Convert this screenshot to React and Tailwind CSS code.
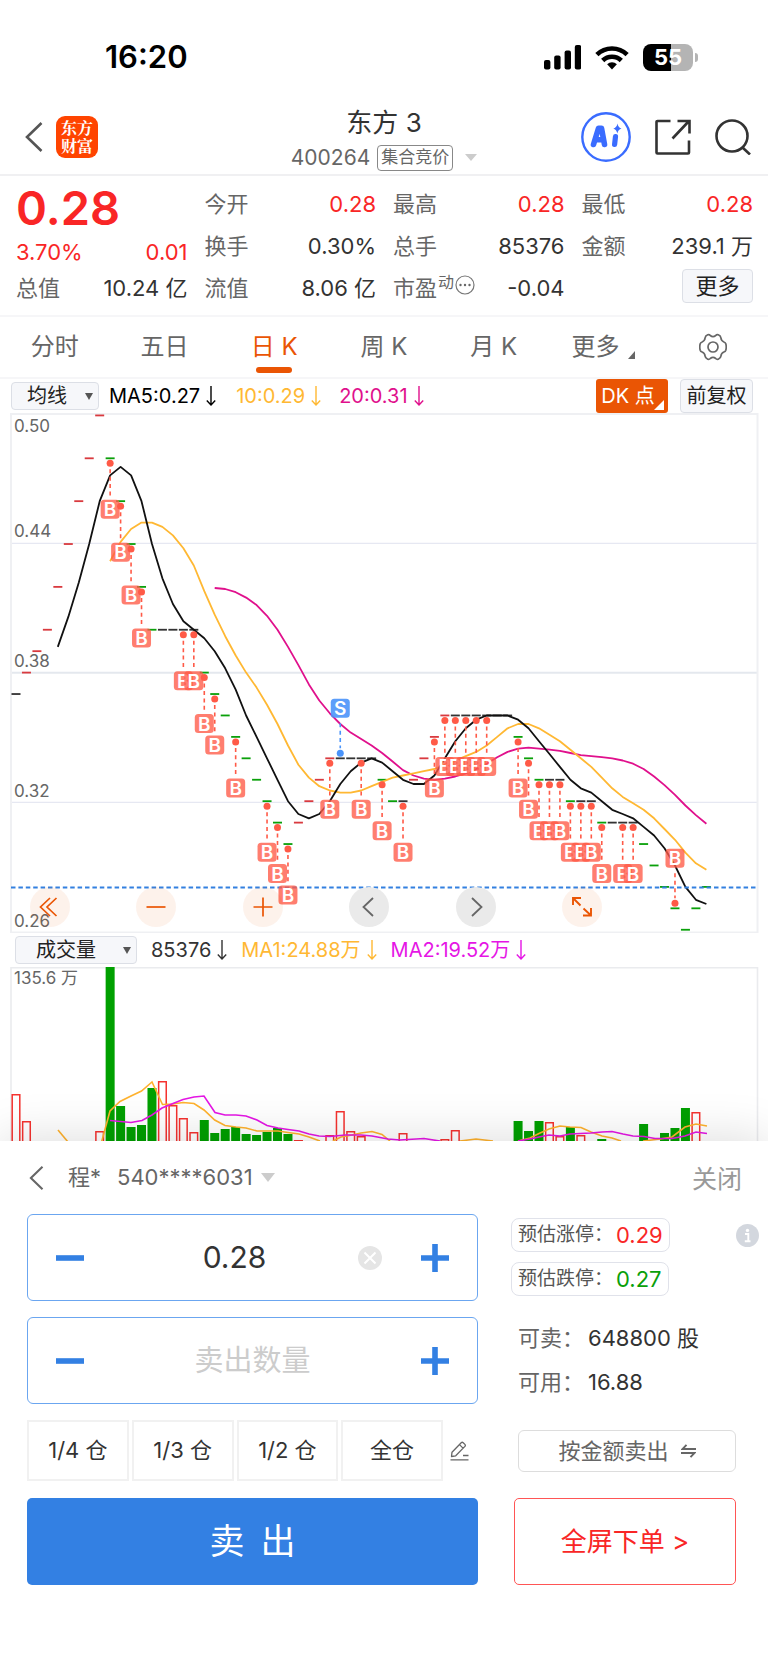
import React, { useState } from "react";

const FONT = "font-['Inter','Noto_Sans_CJK_SC',sans-serif]";

/* ---------- chart data ---------- */

// [price in cents, r = up / g = down / n = unchanged, trade mark]
const DAYS = [
  [37, "n"], [38, "r"], [39, "r"], [40, "r"], [42, "r"], [44, "r"], [46, "r"], [48, "r"], [50, "r"],
  [48, "g", "B"], [46, "g", "B"], [44, "g", "B"], [42, "g", "B"], [40, "g"], [40, "n"], [40, "n"],
  [40, "n", "B"], [40, "n", "B"], [38, "g", "B"], [37, "g", "B"], [36, "g"], [35, "g", "B"], [34, "g"],
  [33, "g"], [32, "g", "B"], [31, "g", "B"], [30, "g", "B"], [31, "r"], [32, "r"], [33, "r"],
  [34, "r", "B"], [34, "n", "S"], [34, "n"], [34, "n", "B"], [34, "n"], [33, "g", "B"], [32, "g"],
  [32, "n", "B"], [33, "r"], [34, "r"], [35, "r", "B"], [36, "r", "B"], [36, "n", "B"], [36, "n", "B"],
  [36, "n", "B"], [36, "n", "B"], [36, "n"], [36, "n"], [35, "g", "B"], [34, "g", "B"], [33, "g", "B"],
  [33, "n", "B"], [33, "n", "B"], [32, "g", "B"], [32, "n", "B"], [32, "n", "B"], [31, "g", "B"],
  [31, "n"], [31, "n", "B"], [31, "n", "B"], [30, "g"], [29, "g"], [28, "g"], [27, "g", "BT"],
  [26, "g"], [27, "g"], [28, "g"],
];

const COLORS = { r: "#d93a3f", g: "#0aa00a", n: "#333333" };
const dayX = (i) => 16 + i * 10.46;
const priceY = (p) => 259.6 - (p - 38) * 21.43;

function average(n) {
  const pts = [];
  for (let i = n - 1; i < DAYS.length; i++) {
    let s = 0;
    for (let j = 0; j < n; j++) s += DAYS[i - j][0];
    pts.push(`${dayX(i).toFixed(1)},${priceY(s / n).toFixed(1)}`);
  }
  return pts.join(" ");
}

// [day, colour, height of the bar above the visible floor]
const VOLUMES = [
  [0, "r", 47], [1, "r", 20], [8, "r", 10], [9, "g", 174], [10, "g", 35], [11, "g", 14], [12, "g", 16],
  [13, "g", 53], [14, "r", 60], [15, "r", 36], [16, "r", 23], [17, "r", 9], [18, "g", 21], [19, "g", 8],
  [20, "g", 12], [21, "g", 14], [22, "g", 7], [23, "g", 6], [24, "g", 9], [25, "g", 13], [26, "g", 7],
  [27, "r", 1], [30, "r", 6], [31, "r", 30], [32, "r", 10], [33, "r", 5], [37, "r", 8], [41, "r", 2],
  [42, "r", 11], [48, "g", 20], [49, "g", 10], [50, "g", 20], [51, "r", 19], [52, "r", 5], [53, "g", 14],
  [54, "r", 6], [56, "g", 2], [60, "g", 17], [62, "g", 8], [63, "g", 13], [64, "g", 33], [65, "r", 29],
];

const VOLUME_MA1 = [
  "58,163 68,175",
  "101,177 110,144 120,134.5 131,129 141.5,124 152,115 162.5,137.5 173,137 183,135.5 194,136.5 204,143 214.7,153 225,158.5 236,160 246,161 257,164 267,164 278,164 288,165.5 299,167 309,170 320,174",
  "333,174 341,170 352,168 361,166 372,164.5 382,167.5 390,174",
  "460,174 476,172 493,174",
  "518,174 530,171 539,166.5 549,162 560,159 570,160 581,160.5 591,165 602,169 612,171 621,174",
  "643,174 660,172 672,170 685,160 696,157 707,159",
];
const VOLUME_MA2 = [
  "110,153.5 131,155.5 142,153.5 152,148 162,141 173,136.5 183,132.5 194,130 204,129 215,145.5 225,148 236,148 246,149 257,153 267,158.5 278,161 288,162.5 299,164 309,167 319,169 330,169.5 345,168 361,168 372,169 388,172 400,173 424,171.5 440,174",
  "518,174 530,172 539,170 549,168 560,169 570,167 591,166 602,165 612,164.5 623,167 633,169 644,169.5 655,171.5 672,171.5 685,169 696,165 707,166.5",
];

/* ---------- small drawings ---------- */

function Chevron({ className }) {
  return (
    <svg viewBox="0 0 18 30" className={className} fill="none" stroke="currentColor" strokeWidth="2.6">
      <path d="M16.5 1 2 15l14.5 14" />
    </svg>
  );
}

function Caret({ className }) {
  return (
    <svg viewBox="0 0 12 8" className={className} fill="currentColor" preserveAspectRatio="none" aria-hidden="true">
      <path d="M0 0h12L6 8z" />
    </svg>
  );
}

function Mark({ i, day }) {
  const x = dayX(i);
  const y = priceY(day[0]);
  const kind = day[2];
  const sell = kind === "S";
  const color = sell ? "#4a94fa" : "#ff5a47";
  const up = sell || kind === "BT";
  const dot = up ? y - 5 : y + 5;
  const box = up ? y - 50 : y + 51;
  return (
    <g>
      <line x1={x} x2={x} y1={up ? box + 15 : dot + 6} y2={up ? dot - 5 : box - 13} stroke={color} strokeWidth="1.6" strokeDasharray="4 3.4" />
      <circle cx={x} cy={dot} r="3.5" fill={color} />
      <rect x={x - 9.5} y={box - 9.5} width="19" height="19" rx="3.5" fill={color} fillOpacity={sell ? 0.9 : 0.78} />
      <text x={x} y={box + 7} textAnchor="middle" fill="#fff" className="text-[19px] font-semibold">
        {kind[0]}
      </text>
    </g>
  );
}

/* ---------- sections ---------- */

function StatusBar() {
  return (
    <div className="flex h-[94px] items-center justify-between pt-5 pr-[70px] pl-[105px] text-black">
      <span className="text-[31px] leading-9 font-semibold">16:20</span>
      <div className="flex items-center gap-[14px]">
        <svg viewBox="0 0 37 25" className="h-[25px] w-[37px]" aria-label="信号">
          <rect x="0" y="15" width="6.4" height="9.5" rx="2" />
          <rect x="10.2" y="10.5" width="6.4" height="14" rx="2" />
          <rect x="20.6" y="5.5" width="6.4" height="19" rx="2" />
          <rect x="30.8" y="0" width="6.4" height="24.5" rx="2" />
        </svg>
        <svg viewBox="0 0 34 25" className="h-[25px] w-[34px]" fill="none" stroke="#000" strokeWidth="4.6" aria-label="无线网络">
          <path d="M1.9 9.6a21.6 21.6 0 0 1 30.2 0" />
          <path d="M7.7 15.5a13.3 13.3 0 0 1 18.6 0" />
          <path d="M17 24.6l-4.9-5.3a7 7 0 0 1 9.8 0z" fill="#000" stroke="none" />
        </svg>
        <div className="flex items-center gap-[2px]">
          <div className="flex h-[27px] w-[50px] items-center justify-center rounded-[8px] bg-[linear-gradient(90deg,#000_55%,#b4b4b4_55%)] text-[22px] leading-[27px] font-bold text-white">
            55
          </div>
          <div className="h-[9px] w-[3px] rounded-r-full bg-[#b4b4b4]" />
        </div>
      </div>
    </div>
  );
}

function Header() {
  return (
    <header className="grid h-[82px] grid-cols-[1fr_auto_1fr] items-center border-b-2 border-[#f0f0f2] px-[17px] pt-[6px]">
      <div className="flex items-center gap-[13px] pl-2">
        <button aria-label="返回" className="text-[#555]">
          <Chevron className="h-[30px] w-[18px]" />
        </button>
        <div className="flex h-[42px] w-[42px] items-center justify-center rounded-[9px] bg-[#ff4400] text-center font-['Noto_Serif_CJK_SC','Noto_Sans_CJK_SC',serif] text-[16px] leading-[18px] font-bold text-white">
          <span>
            东方
            <br />
            财富
          </span>
        </div>
      </div>
      <div className="flex flex-col items-center gap-[5px] pt-[6px]">
        <h1 className="text-[26px] leading-[30px] text-[#333]">东方 3</h1>
        <button className="flex h-[30px] items-center text-[#666]">
          <span className="text-[21px]">400264</span>
          <span className="ml-[7px] flex h-[26px] items-center rounded-[4px] border border-[#888] px-[3px] text-[17px]">
            集合竞价
          </span>
          <Caret className="ml-3 h-[7px] w-3 text-[#ccc]" />
        </button>
      </div>
      <div className="flex items-center justify-end gap-6">
        <button aria-label="Ai">
          <svg viewBox="0 0 50 50" className="h-[50px] w-[50px]">
            <circle cx="25" cy="25" r="23.7" fill="none" stroke="#3a6cff" strokeWidth="2.4" />
            <g fill="none" stroke="#3a6cff" strokeLinecap="round" strokeLinejoin="round">
              <path d="M12.5 32.5 17.500 16.200h3l3 16.300M15 27.800h7" strokeWidth="5.600" />
              <path d="M34.500 24.500 33.600 32.500" strokeWidth="5.200" />
            </g>
            <path d="M36.500 11.500q.7 4.200 4 5-3.400.9-4.200 5-.8-4.100-4-5 3.400-.8 4.200-5z" fill="#3a6cff" />
          </svg>
        </button>
        <button aria-label="分享">
          <svg viewBox="0 0 36 36" className="h-9 w-9" fill="none" stroke="#333" strokeWidth="2.6">
            <path d="M15.500 2H2.500a1 1 0 0 0-1 1v30.500a1 1 0 0 0 1 1H33a1 1 0 0 0 1-1V21.500" />
            <path d="M22.500 2H34.500V14.500M34 2 17.500 19.500" />
          </svg>
        </button>
        <button aria-label="搜索">
          <svg viewBox="0 0 36 36" className="h-9 w-9" fill="none" stroke="#333" strokeWidth="2.6">
            <circle cx="17" cy="17" r="15.500" />
            <path d="M27.500 28.500 35 35.500" />
          </svg>
        </button>
      </div>
    </header>
  );
}

function Figure({ label, value, red, children }) {
  return (
    <div className="flex h-[42px] items-center justify-between">
      <span className="flex items-center text-[#666]">
        {label}
        {children}
      </span>
      <span className={red ? "text-[#f92626]" : "text-[#333]"}>{value}</span>
    </div>
  );
}

function Quote() {
  return (
    <section className="grid h-[141px] grid-cols-4 gap-x-[17px] border-b-2 border-[#f6f6f8] pt-[7px] pr-[15px] pl-4 text-[22px] leading-7">
      <div>
        <div className="flex h-[49px] items-center text-[47px] leading-[49px] font-semibold text-[#f92626]">0.28</div>
        <div className="flex h-[35px] items-center justify-between pt-1 text-[#f92626]">
          <span>3.70%</span>
          <span>0.01</span>
        </div>
        <Figure label="总值" value="10.24 亿" />
      </div>
      <div>
        <Figure label="今开" value="0.28" red />
        <Figure label="换手" value="0.30%" />
        <Figure label="流值" value="8.06 亿" />
      </div>
      <div>
        <Figure label="最高" value="0.28" red />
        <Figure label="总手" value="85376" />
        <Figure label="市盈" value="-0.04">
          <span className="mb-3 ml-[1px] text-[16px] leading-4">动</span>
          <svg viewBox="0 0 20 20" className="mb-[7px] ml-[1px] h-5 w-5" aria-hidden="true">
            <circle cx="10" cy="10" r="9" fill="none" stroke="#777" strokeWidth="1.200" />
            <circle cx="5.500" cy="10" r="1.200" fill="#666" />
            <circle cx="10" cy="10" r="1.200" fill="#666" />
            <circle cx="14.500" cy="10" r="1.200" fill="#666" />
          </svg>
        </Figure>
      </div>
      <div>
        <Figure label="最低" value="0.28" red />
        <Figure label="金额" value="239.1 万" />
        <div className="flex justify-end pt-[2px]">
          <button className="h-[34px] w-[71px] rounded-[4px] border border-[#dcdfe6] bg-[#f6f7fa] text-[#222]">
            更多
          </button>
        </div>
      </div>
    </section>
  );
}

function Periods() {
  const [active, setActive] = useState("日K");
  return (
    <nav className="grid h-[62px] grid-cols-7 border-b-2 border-[#f6f6f8] text-[24px] leading-[60px] text-[#666]">
      {["分时", "五日", "日K", "周K", "月K"].map((t) => (
        <button key={t} onClick={() => setActive(t)} className={`flex flex-col items-center ${active === t ? "text-[#ea5504]" : ""}`}>
          <span>{t.replace("K", " K")}</span>
          {active === t && <span className="-mt-[10px] h-[6px] w-9 rounded-full bg-[#ea5504]" />}
        </button>
      ))}
      <button className="flex items-end justify-center">
        <span>更多</span>
        <svg viewBox="0 0 7 8" className="mb-[18px] ml-[9px] h-2 w-[7px]" fill="#666" aria-hidden="true">
          <path d="M7 0v8H0z" />
        </svg>
      </button>
      <button aria-label="设置" className="flex items-center justify-center">
        <svg viewBox="0 0 28 28" className="h-7 w-7" fill="none" stroke="#666" strokeWidth="1.700" strokeLinejoin="round">
          <path d="M8.700 1.800q1.600-.4 2.600.7 2.700 2.200 5.400 0 1-1.100 2.600-.7 2.400 1 2.600 3 .2 3 3 4.200 1.500.5 1.900 1.800.9 3.200 0 6.400-.4 1.300-1.900 1.800-2.800 1.200-3 4.200-.2 2-2.600 3-1.600.4-2.600-.7-2.700-2.200-5.400 0-1 1.100-2.600.7-2.400-1-2.600-3-.2-3-3-4.200-1.500-.5-1.900-1.800-.9-3.200 0-6.400.4-1.300 1.900-1.800 2.800-1.200 3-4.200.2-2 2.600-3z" />
          <circle cx="14" cy="14" r="5" />
        </svg>
      </button>
    </nav>
  );
}

function Dropdown({ label, className }) {
  return (
    <div className={`relative flex h-[28px] items-center rounded-[4px] border border-[#dcdfe6] bg-[#f6f7fa] ${className}`}>
      <select aria-label={label} className="h-full w-full appearance-none text-[20px] leading-[26px] text-[#222] outline-none">
        <option>{label}</option>
      </select>
      <Caret className="pointer-events-none absolute right-[5px] h-[7px] w-2 text-[#555]" />
    </div>
  );
}

function Down() {
  return (
    <svg viewBox="0 0 10 20" className="ml-[6px] h-5 w-[10px]" fill="none" stroke="currentColor" strokeWidth="1.400" aria-label="下降">
      <path d="M5 0v18.500M.8 14.500 5 19l4.200-4.500" />
    </svg>
  );
}

function Indicator({ children, className }) {
  return <span className={`flex items-center ${className}`}>{children}<Down /></span>;
}

function PriceChart() {
  const tools = "flex h-10 w-10 items-center justify-center rounded-full";
  const warm = `${tools} bg-[#ea5504]/8 text-[#ea5504]`;
  const grey = `${tools} bg-[#eaeaea] text-[#666]`;
  return (
    <div className="relative">
      <svg viewBox="0 0 768 520" className="block w-full" role="img" aria-label="日K线图">
        <path d="M10 130.300H757M10 389.300H757" stroke="#e6e8f2" strokeWidth="1.300" />
        <path d="M10 259.700H757" stroke="#e4e8ee" strokeWidth="2" />
        <rect x="11" y="1" width="746.500" height="518.500" fill="none" stroke="#eff0f3" strokeWidth="2" />
        <g fill="#666" className="text-[17px]">
          <text x="14" y="19">0.50</text>
          <text x="14" y="124">0.44</text>
          <text x="14" y="254">0.38</text>
          <text x="14" y="384">0.32</text>
          <text x="14" y="514">0.26</text>
        </g>
        {DAYS.map((d, i) => (
          <rect key={i} x={dayX(i) - 4.500} y={priceY(d[0]) - 0.900} width="9" height="1.800" fill={COLORS[d[1]]} />
        ))}
        <g fill="none" strokeWidth="1.800" strokeLinejoin="round">
          <polyline points={average(20)} stroke="#e0108c" />
          <polyline points={average(10)} stroke="#ffb833" />
          <polyline points={average(5)} stroke="#111" />
        </g>
        <path d="M11 474.500H757" stroke="#3380e0" strokeWidth="2" strokeDasharray="4.500 2.900" />
        {DAYS.map((d, i) => d[2] && <Mark key={i} i={i} day={d} />)}
      </svg>
      <div className="absolute right-[166px] bottom-[6px] left-[30px] flex justify-between">
        <button aria-label="最早" className={warm}>
          <svg viewBox="0 0 40 40" className="h-10 w-10" fill="none" stroke="currentColor" strokeWidth="1.700"><path d="M20 11l-9.500 9 9.500 9M26.500 11l-9.500 9 9.500 9" /></svg>
        </button>
        <button aria-label="缩小" className={warm}>
          <svg viewBox="0 0 40 40" className="h-10 w-10" stroke="currentColor" strokeWidth="1.700"><path d="M10.500 20h19" /></svg>
        </button>
        <button aria-label="放大" className={warm}>
          <svg viewBox="0 0 40 40" className="h-10 w-10" stroke="currentColor" strokeWidth="1.700"><path d="M10.500 20h19M20 10.500v19" /></svg>
        </button>
        <button aria-label="向左" className={grey}>
          <svg viewBox="0 0 40 40" className="h-10 w-10" fill="none" stroke="currentColor" strokeWidth="1.800"><path d="M24 11l-9.500 9 9.500 9" /></svg>
        </button>
        <button aria-label="向右" className={grey}>
          <svg viewBox="0 0 40 40" className="h-10 w-10" fill="none" stroke="currentColor" strokeWidth="1.800"><path d="M16 11l9.500 9-9.500 9" /></svg>
        </button>
        <button aria-label="全屏" className={warm}>
          <svg viewBox="0 0 40 40" className="h-10 w-10" fill="none" stroke="currentColor" strokeWidth="1.900"><path d="M11 18v-7h8M11 11l7.500 7.500M29 21v7.500h-8M28.800 28.300 21.500 21.500" /></svg>
        </button>
      </div>
    </div>
  );
}

function VolumeChart() {
  return (
    <svg viewBox="0 0 768 174" className="block w-full" role="img" aria-label="成交量图">
      <path d="M11 174V.7H757.500V174" fill="none" stroke="#eaebee" strokeWidth="1.600" />
      {VOLUMES.map(([i, k, h]) =>
        k === "g" ? (
          <rect key={i} x={dayX(i) - 4.500} y={174 - h} width="9" height={h} fill="#00a000" />
        ) : (
          <path key={i} d={`M${dayX(i) - 3.800} 174V${174.700 - h}h7.600V174`} fill="none" stroke="#f5322f" strokeWidth="1.500" />
        )
      )}
      <g fill="none" strokeWidth="1.600">
        {VOLUME_MA1.map((p) => <polyline key={p} points={p} stroke="#ffb22e" />)}
        {VOLUME_MA2.map((p) => <polyline key={p} points={p} stroke="#e516e5" />)}
      </g>
      <text x="14" y="17" fill="#666" className="text-[17px]">135.6 万</text>
    </svg>
  );
}

function Step({ plus, label }) {
  return (
    <button aria-label={label} className="flex h-14 w-14 shrink-0 items-center justify-center">
      <svg viewBox="0 0 28 28" className="h-7 w-7" stroke="#3380e3" strokeWidth="5.600">
        <path d={plus ? "M0 14h28M14 0v28" : "M0 14h28"} />
      </svg>
    </button>
  );
}

function OrderSheet() {
  const [price, setPrice] = useState("0.28");
  const [amount, setAmount] = useState("");
  const field = "relative flex h-[87px] items-center justify-between rounded-[6px] border border-[#6ba6f0] px-[14px]";
  const chip = "flex h-[34px] items-center rounded-[8px] border border-[#e0e2ea] px-[6px] text-[19px] text-[#555]";
  return (
    <section className="relative grow bg-white pb-20 shadow-[0_-4px_44px_rgba(0,0,0,0.13)]">
      <div className="flex h-[73px] items-center justify-between pr-[26px] pl-[29px] text-[#666]">
        <div className="flex items-center">
          <button aria-label="返回"><Chevron className="h-6 w-[15px]" /></button>
          <button className="ml-6 flex items-center text-[22px]">
            程*<span className="ml-4">540****6031</span>
            <Caret className="ml-2 h-[9px] w-[14px] text-[#ccc]" />
          </button>
        </div>
        <button className="pt-1 text-[25px] text-[#999]">关闭</button>
      </div>

      <div className="flex gap-[33px] pl-[27px]">
        <div className="flex grow flex-col gap-4">
          <div className={field}>
            <Step label="减少价格" />
            <input
              aria-label="卖出价格"
              value={price}
              onChange={(e) => setPrice(e.target.value)}
              className="w-0 grow pr-9 text-center text-[30px] text-[#333] outline-none"
            />
            <button aria-label="清除" onClick={() => setPrice("")} className="absolute right-[95px]">
              <svg viewBox="0 0 24 24" className="h-6 w-6">
                <circle cx="12" cy="12" r="12" fill="#e5e5e5" />
                <path d="M6.500 6.500l11 11M17.500 6.500l-11 11" stroke="#fff" strokeWidth="2" />
              </svg>
            </button>
            <Step plus label="增加价格" />
          </div>
          <div className={field}>
            <Step label="减少数量" />
            <input
              aria-label="卖出数量"
              placeholder="卖出数量"
              value={amount}
              onChange={(e) => setAmount(e.target.value)}
              className="w-0 grow text-center text-[29px] text-[#333] outline-none placeholder:text-[#ccc]"
            />
            <Step plus label="增加数量" />
          </div>
          <div className="flex items-center">
            <div className="grid grow grid-cols-4 gap-[3px] text-[22px] text-[#333]">
              {["1/4 仓", "1/3 仓", "1/2 仓", "全仓"].map((t) => (
                <button key={t} className="h-[61px] border-2 border-[#f1f1f1]">{t}</button>
              ))}
            </div>
            <button aria-label="编辑" className="mr-[9px] ml-[7px]">
              <svg viewBox="0 0 19 20" className="h-5 w-[19px]" fill="none" stroke="#666" strokeWidth="1.300" strokeLinejoin="round">
                <path d="M1.500 15.500 2 11.200 11.200 1.700q1-.9 2 0l1.700 1.700q.9 1 0 2L5.700 14.800zM9.500 3.600l3.500 3.500M13 14.500h5.500M.5 18.800h18" />
              </svg>
            </button>
          </div>
        </div>

        <div className="flex w-[257px] shrink-0 flex-col pt-1">
          <div className="flex items-center justify-between pr-[9px]">
            <div className={chip}>
              预估涨停：<span className="ml-[3px] text-[22px] text-[#f92626]">0.29</span>
            </div>
            <button aria-label="说明">
              <svg viewBox="0 0 23 23" className="h-[23px] w-[23px]">
                <circle cx="11.500" cy="11.500" r="11.500" fill="#d3d7de" />
                <circle cx="11.500" cy="6.400" r="1.700" fill="#fff" />
                <path d="M9 10h3.300v7M8.800 17.200h5.700" fill="none" stroke="#fff" strokeWidth="1.900" />
              </svg>
            </button>
          </div>
          <div className={`${chip} mt-[10px] self-start`}>
            预估跌停：<span className="ml-[3px] text-[22px] text-[#0aa00a]">0.27</span>
          </div>
          <dl className="mt-5 pl-[7px] text-[22px] leading-[44px] text-[#333]">
            <div className="flex">
              <dt className="w-[70px] shrink-0 whitespace-nowrap text-[#666]">可卖：</dt>
              <dd>648800 股</dd>
            </div>
            <div className="flex">
              <dt className="w-[70px] shrink-0 whitespace-nowrap text-[#666]">可用：</dt>
              <dd>16.88</dd>
            </div>
          </dl>
          <button className="mt-[26px] mr-8 ml-[7px] flex h-[42px] items-center justify-center gap-3 rounded-[6px] border border-[#ddd] text-[22px] text-[#666]">
            按金额卖出
            <svg viewBox="0 0 15 14" className="h-[14px] w-[15px]" fill="none" stroke="#666" strokeWidth="1.900" aria-hidden="true">
              <path d="M5.500.8 1.500 5H15M0 9h13.500l-4 4.200" />
            </svg>
          </button>
        </div>
      </div>

      <div className="mt-[17px] flex gap-9 pr-8 pl-[27px]">
        <button className="flex h-[87px] grow items-center justify-center gap-4 rounded-[5px] bg-[#3380e3] text-[35px] text-white">
          <span>卖</span>
          <span>出</span>
        </button>
        <button className="h-[87px] w-[222px] shrink-0 rounded-[5px] border border-[#f55] text-[26px] text-[#f92626]">
          全屏下单 &gt;
        </button>
      </div>
    </section>
  );
}

export default function App() {
  return (
    <main className={`flex min-h-screen flex-col overflow-hidden bg-white ${FONT}`}>
      <StatusBar />
      <Header />
      <Quote />
      <Periods />
      <div className="flex h-[34px] items-center pr-[15px] pl-[11px] text-[20px]">
        <Dropdown label="均线" className="w-[88px] pl-[15px]" />
        <Indicator className="ml-[10px] text-black">MA5:0.27</Indicator>
        <Indicator className="ml-5 text-[#ffb833]">10:0.29</Indicator>
        <Indicator className="ml-[18px] text-[#e0108c]">20:0.31</Indicator>
        <button className="relative ml-auto h-[34px] w-[72px] rounded-[3px] bg-[#ea5504] pr-2 text-white">
          DK 点
          <svg viewBox="0 0 10 10" className="absolute right-1 bottom-[3px] h-[10px] w-[10px]" fill="#fff" aria-hidden="true">
            <path d="M10 0v10H0z" />
          </svg>
        </button>
        <button className="ml-3 h-[34px] w-[73px] rounded-[4px] border border-[#dcdfe6] bg-[#f6f7fa] text-[#222]">前复权</button>
      </div>
      <PriceChart />
      <div className="flex h-[34px] items-center pl-[15px] text-[20px]">
        <Dropdown label="成交量" className="w-[122px] pl-5" />
        <Indicator className="ml-[14px] text-[#333]">85376</Indicator>
        <Indicator className="ml-[14px] text-[#ffb833]">MA1:24.88万</Indicator>
        <Indicator className="ml-[14px] text-[#e516e5]">MA2:19.52万</Indicator>
      </div>
      <VolumeChart />
      <OrderSheet />
    </main>
  );
}
